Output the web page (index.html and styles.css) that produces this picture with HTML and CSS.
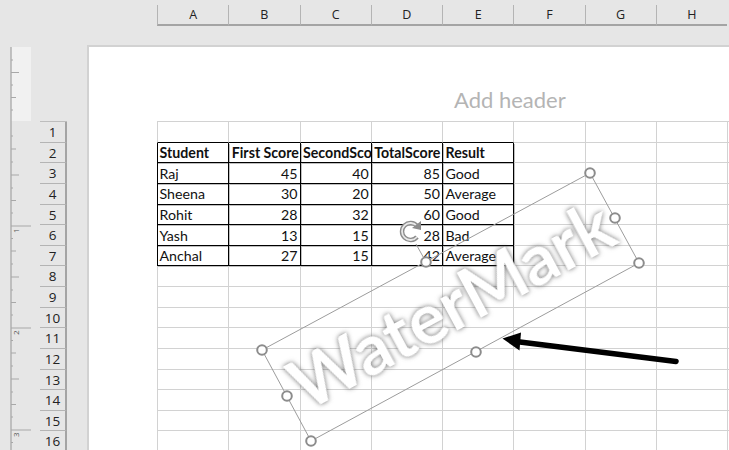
FILE: index.html
```html
<!DOCTYPE html>
<html lang="en">
<head>
<meta charset="utf-8">
<title>Worksheet page layout</title>
<link rel="stylesheet" href="styles.css">
</head>
<body>
<div class="app">
  <div class="col-headers">
    <div class="col-h">A</div><div class="col-h">B</div><div class="col-h">C</div><div class="col-h">D</div>
    <div class="col-h">E</div><div class="col-h">F</div><div class="col-h">G</div><div class="col-h">H</div>
  </div>
  <div class="workspace">
    <svg class="ruler" width="21" height="403" viewBox="0 0 21 403">
      <rect class="ruler-margin" x="1" y="0" width="20" height="74"/>
      <path class="ruler-axis" d="M1 0V403"/>
      <path class="ruler-tick" d="M1 13H3M1 25.500H9M1 38H3M1 50.500H6M1 63H3M1 89H3M1 102H6M1 115H3M1 128H9M1 141H3M1 153.500H6M1 166H3M1 179H21M1 191.500H3M1 204H6M1 217H3M1 230H9M1 243H3M1 255.500H6M1 268H3M1 281H21M1 293.500H3M1 306H6M1 319H3M1 332H9M1 345H3M1 357.500H6M1 370H3M1 383H21M1 395.500H3"/>
      <text class="ruler-num" transform="translate(8.500 183) rotate(-90)" x="-3" y="0">1</text>
      <text class="ruler-num" transform="translate(8.500 285) rotate(-90)" x="-3" y="0">2</text>
      <text class="ruler-num" transform="translate(8.500 387) rotate(-90)" x="-3" y="0">3</text>
    </svg>
    <div class="row-headers">
      <div class="row-h">1</div><div class="row-h">2</div><div class="row-h">3</div><div class="row-h">4</div>
      <div class="row-h">5</div><div class="row-h">6</div><div class="row-h">7</div><div class="row-h">8</div>
      <div class="row-h">9</div><div class="row-h">10</div><div class="row-h">11</div><div class="row-h">12</div>
      <div class="row-h">13</div><div class="row-h">14</div><div class="row-h">15</div><div class="row-h">16</div>
    </div>
    <div class="page">
      <div class="page-header"><span class="add-header">Add header</span></div>
      <div class="sheet">
        <div class="g f tb"></div><div class="g tb"></div><div class="g tb"></div><div class="g tb"></div><div class="g tb"></div><div class="g"></div><div class="g"></div><div class="g"></div><div class="g"></div>
        <div class="g f l c b">Student</div><div class="g c b">First Score</div><div class="g c b">SecondSco</div><div class="g c b">TotalScore</div><div class="g c b">Result</div><div class="g"></div><div class="g"></div><div class="g"></div><div class="g"></div>
        <div class="g f l c">Raj</div><div class="g c n">45</div><div class="g c n">40</div><div class="g c n">85</div><div class="g c">Good</div><div class="g"></div><div class="g"></div><div class="g"></div><div class="g"></div>
        <div class="g f l c">Sheena</div><div class="g c n">30</div><div class="g c n">20</div><div class="g c n">50</div><div class="g c">Average</div><div class="g"></div><div class="g"></div><div class="g"></div><div class="g"></div>
        <div class="g f l c">Rohit</div><div class="g c n">28</div><div class="g c n">32</div><div class="g c n">60</div><div class="g c">Good</div><div class="g"></div><div class="g"></div><div class="g"></div><div class="g"></div>
        <div class="g f l c">Yash</div><div class="g c n">13</div><div class="g c n">15</div><div class="g c n">28</div><div class="g c">Bad</div><div class="g"></div><div class="g"></div><div class="g"></div><div class="g"></div>
        <div class="g f l c">Anchal</div><div class="g c n">27</div><div class="g c n">15</div><div class="g c n">42</div><div class="g c">Average</div><div class="g"></div><div class="g"></div><div class="g"></div><div class="g"></div>
        <div class="g f"></div><div class="g"></div><div class="g"></div><div class="g"></div><div class="g"></div><div class="g"></div><div class="g"></div><div class="g"></div><div class="g"></div>
        <div class="g f"></div><div class="g"></div><div class="g"></div><div class="g"></div><div class="g"></div><div class="g"></div><div class="g"></div><div class="g"></div><div class="g"></div>
        <div class="g f"></div><div class="g"></div><div class="g"></div><div class="g"></div><div class="g"></div><div class="g"></div><div class="g"></div><div class="g"></div><div class="g"></div>
        <div class="g f"></div><div class="g"></div><div class="g"></div><div class="g"></div><div class="g"></div><div class="g"></div><div class="g"></div><div class="g"></div><div class="g"></div>
        <div class="g f"></div><div class="g"></div><div class="g"></div><div class="g"></div><div class="g"></div><div class="g"></div><div class="g"></div><div class="g"></div><div class="g"></div>
        <div class="g f"></div><div class="g"></div><div class="g"></div><div class="g"></div><div class="g"></div><div class="g"></div><div class="g"></div><div class="g"></div><div class="g"></div>
        <div class="g f"></div><div class="g"></div><div class="g"></div><div class="g"></div><div class="g"></div><div class="g"></div><div class="g"></div><div class="g"></div><div class="g"></div>
        <div class="g f"></div><div class="g"></div><div class="g"></div><div class="g"></div><div class="g"></div><div class="g"></div><div class="g"></div><div class="g"></div><div class="g"></div>
        <div class="g f"></div><div class="g"></div><div class="g"></div><div class="g"></div><div class="g"></div><div class="g"></div><div class="g"></div><div class="g"></div><div class="g"></div>
      </div>
    </div>
  </div>
  <svg class="overlay" width="729" height="450" viewBox="0 0 729 450">
    <text class="wm" transform="translate(452 306) rotate(-28.4)" x="0" y="24" text-anchor="middle">WaterMark</text>
    <path class="box" d="M262 350L590 173L639 263L311 441Z"/>
    <path class="box" d="M426 262L416 244"/>
    <g class="rotate">
      <path class="rot-o" d="M417 226A8.500 8.500 0 1 0 417 237"/>
      <path class="rot-i" d="M417 226A8.500 8.500 0 1 0 417 237"/>
      <path class="rot-h" d="M421 221L421 230L412 228Z"/>
    </g>
    <circle class="h" cx="262" cy="350" r="4.800"/><circle class="h" cx="590" cy="173" r="4.800"/>
    <circle class="h" cx="639" cy="263" r="4.800"/><circle class="h" cx="311" cy="441" r="4.800"/>
    <circle class="h" cx="426" cy="262" r="4.800"/><circle class="h" cx="615" cy="218" r="4.800"/>
    <circle class="h" cx="476" cy="352" r="4.800"/><circle class="h" cx="287" cy="396" r="4.800"/>
    <path class="arrow-line" d="M676 361.500L516 341.500"/>
    <path class="arrow-head" d="M502.500 338.500L521 332.500L519.500 350.500Z"/>
  </svg>
</div>
</body>
</html>
```
FILE: styles.css
```css
html, body { margin: 0; padding: 0; height: 100%; overflow: hidden; }
body { background: #e6e6e6; }
.app { position: relative; width: 729px; height: 450px; overflow: hidden; }

.col-headers { display: flex; height: 20px; padding: 5px 0 0 157px; }
.col-h {
  flex: 0 0 71.25px; box-sizing: border-box; height: 21px;
  border-left: 1px solid #b4b4b4; border-bottom: 2px solid #a4a4a4;
  font: 12.500px/19px "Open Sans", sans-serif; color: #222; text-align: center;
}

.workspace { display: flex; align-items: flex-start; padding-top: 21px; }
.ruler { flex: none; margin: 1px 0 0 10px; }
.ruler-margin { fill: #f1f1f1; }
.ruler-axis { stroke: #b0b0b0; stroke-width: 1.500; fill: none; }
.ruler-tick { stroke: #a8a8a8; stroke-width: 1; fill: none; }
.ruler-num { font: 8px "Open Sans", sans-serif; fill: #555; }

.row-headers { flex: none; width: 27px; margin: 75px 0 0 9px; border-top: 1px solid #bdbdbd; }
.row-h {
  box-sizing: border-box; height: 20.630px;
  border-right: 2px solid #a4a4a4; border-bottom: 1px solid #b4b4b4;
  font: 13.500px/21px "Open Sans", sans-serif; color: #222; text-align: center;
}

.page {
  flex: 1; min-width: 0; height: 404px; margin: -1px 0 0 20px;
  background: #fff; border-left: 2px solid #d2d2d2; border-top: 2px solid #d2d2d2;
}
.page-header { box-sizing: border-box; height: 74px; padding: 38px 0 0 365px; }
.add-header { font: 22px/30px Lato, sans-serif; color: #b4b4b4; }

.sheet {
  display: grid; grid-template-columns: 72.250px repeat(8, 71.250px); grid-auto-rows: 20.630px;
  width: 642.250px; margin-left: 68px; border-top: 1px solid #d2d2d2;
}
.g { box-sizing: border-box; min-width: 0; border-right: 1px solid #d2d2d2; border-bottom: 1px solid #d2d2d2; }
.f { border-left: 1px solid #d2d2d2; }
.tb { border-bottom-color: #000; }
.c {
  padding: 1.500px 2px 0 2.500px; overflow: hidden; white-space: nowrap;
  border-right-color: #000; border-bottom-color: #000;
  box-shadow: 1px 1px 0 rgba(0,0,0,.25);
  font: 14.200px/18px Lato, sans-serif; color: #111;
}
.l { border-left-color: #000; }
.f.c { padding-left: 1.500px; }
.b { font-weight: 700; }
.n { text-align: right; }

.overlay { position: absolute; left: 0; top: 0; }
.wm {
  font: 700 70px Lato, sans-serif; fill: #fff;
  filter: drop-shadow(0 0 2.500px rgba(70,70,70,.8));
}
.box { fill: none; stroke: #9c9c9c; stroke-width: 1; }
.h { fill: #fff; stroke: #8c8c8c; stroke-width: 2; }
.rot-o { fill: none; stroke: #8c8c8c; stroke-width: 4.500; }
.rot-i { fill: none; stroke: #e8e8e8; stroke-width: 1.800; }
.rot-h { fill: #8c8c8c; }
.arrow-line { stroke: #000; stroke-width: 5.500; stroke-linecap: round; fill: none; }
.arrow-head { fill: #000; }
```
